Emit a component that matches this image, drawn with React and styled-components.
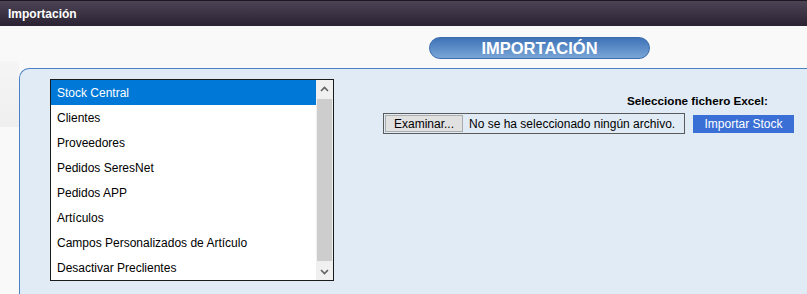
import React from 'react';
import styled, { createGlobalStyle } from 'styled-components';

const GlobalStyle = createGlobalStyle`
  body {
    margin: 0;
    background: #f9f9f9;
    font-family: "Liberation Sans", Arial, sans-serif;
    overflow: hidden;
  }
`;

const Header = styled.header`
  height: 25px;
  display: flex;
  align-items: center;
  padding-left: 8px;
  border-top: 1px solid #1d1722;
  background: linear-gradient(to bottom, #4c4354, #2b2233);
  color: #ffffff;
  font-size: 12px;
  font-weight: bold;
`;

const TitleRow = styled.div`
  padding: 11px 0 0 429px;
`;

const Pill = styled.div`
  box-sizing: border-box;
  width: 221px;
  height: 22px;
  border: 1px solid #3a6cae;
  border-radius: 11px;
  background: linear-gradient(to bottom, #3e73b7, #7aa5d7);
  color: #ffffff;
  font-size: 16.5px;
  font-weight: bold;
  line-height: 20px;
  text-align: center;
`;

const BodyRow = styled.div`
  display: flex;
  margin-top: 9px;
`;

const Gutter = styled.div`
  flex: 0 0 19px;
  height: 66px;
  margin-top: -7px;
  background: linear-gradient(to bottom, #f5f5f5, #efefef);
`;

const Panel = styled.section`
  flex: 1;
  display: flex;
  gap: 49px;
  margin-right: -40px;
  padding: 10px 0 20px 30px;
  border-top: 1px solid #4a82c4;
  border-left: 1px solid #4a82c4;
  border-top-left-radius: 10px;
  background: #e1ebf5;
`;

const ListBox = styled.div`
  box-sizing: border-box;
  width: 284px;
  display: flex;
  border: 1px solid #1b1b1b;
  background: #ffffff;
`;

const Options = styled.ul`
  flex: 1;
  margin: 0;
  padding: 0;
  list-style: none;
`;

const Option = styled.li`
  height: 25px;
  line-height: 26px;
  padding-left: 6px;
  font-size: 12px;
  color: ${p => (p.$selected ? '#ffffff' : '#000000')};
  background: ${p => (p.$selected ? '#0078d7' : 'transparent')};
`;

const Scrollbar = styled.div`
  flex: 0 0 17px;
  display: flex;
  flex-direction: column;
  background: #f0f0f0;
`;

const ScrollArrow = styled.div`
  height: 17px;
  display: flex;
  align-items: center;
  justify-content: center;
`;

const Thumb = styled.div`
  flex: 1;
  margin: 2px 1px;
  background: #cdcdcd;
`;

const UploadColumn = styled.div`
  width: 411px;
  display: flex;
  flex-direction: column;
`;

const Label = styled.div`
  margin-top: 15px;
  padding-right: 26px;
  text-align: right;
  font-size: 11.7px;
  font-weight: bold;
  line-height: 14px;
  color: #000000;
`;

const UploadRow = styled.div`
  display: flex;
  align-items: center;
  gap: 8px;
  margin-top: 5px;
`;

const FileInput = styled.div`
  box-sizing: border-box;
  width: 302px;
  height: 21px;
  display: flex;
  align-items: center;
  gap: 6px;
  padding: 1px;
  border: 1px solid #5a5a5a;
  font-size: 12px;
  color: #000000;
  white-space: nowrap;
`;

const BrowseButton = styled.span`
  box-sizing: border-box;
  width: 78px;
  height: 17px;
  display: flex;
  align-items: center;
  justify-content: center;
  border: 1px solid #adadad;
  background: #e1e1e1;
`;

const ImportButton = styled.button`
  box-sizing: border-box;
  width: 101px;
  height: 18px;
  padding: 0;
  border: none;
  background: #3a6fd6;
  color: #ffffff;
  font-family: "Liberation Sans", Arial, sans-serif;
  font-size: 12px;
`;

const Chevron = ({ up }) => (
  <svg width="9" height="6" viewBox="0 0 9 6">
    <path
      d={up ? 'M1 5 L4.5 1.5 L8 5' : 'M1 1 L4.5 4.5 L8 1'}
      fill="none"
      stroke="#606060"
      strokeWidth="1.6"
    />
  </svg>
);

const options = [
  'Stock Central',
  'Clientes',
  'Proveedores',
  'Pedidos SeresNet',
  'Pedidos APP',
  'Artículos',
  'Campos Personalizados de Artículo',
  'Desactivar Preclientes',
];

export default function App() {
  return (
    <>
      <GlobalStyle />
      <Header>Importación</Header>
      <TitleRow>
        <Pill>IMPORTACIÓN</Pill>
      </TitleRow>
      <BodyRow>
        <Gutter />
        <Panel>
          <ListBox>
            <Options>
              {options.map((o, i) => (
                <Option key={o} $selected={i === 0}>{o}</Option>
              ))}
            </Options>
            <Scrollbar>
              <ScrollArrow><Chevron up /></ScrollArrow>
              <Thumb />
              <ScrollArrow><Chevron /></ScrollArrow>
            </Scrollbar>
          </ListBox>
          <UploadColumn>
            <Label>Seleccione fichero Excel:</Label>
            <UploadRow>
              <FileInput>
                <BrowseButton>Examinar...</BrowseButton>
                <span>No se ha seleccionado ningún archivo.</span>
              </FileInput>
              <ImportButton>Importar Stock</ImportButton>
            </UploadRow>
          </UploadColumn>
        </Panel>
      </BodyRow>
    </>
  );
}
